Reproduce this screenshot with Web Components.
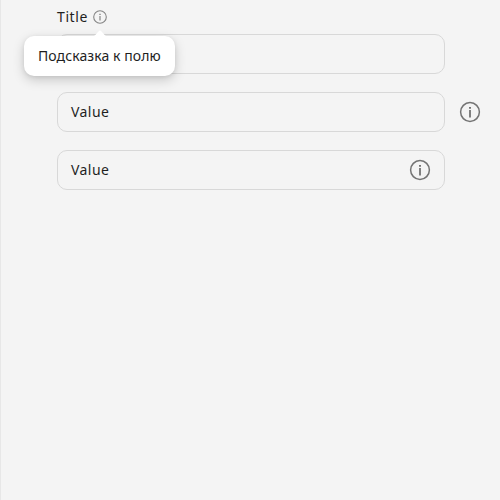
<!DOCTYPE html>
<html lang="ru">
<head>
<meta charset="utf-8">
<title>Fields</title>
<style>html,body{margin:0;height:100%;background:#f4f4f4;overflow:hidden}</style>
</head>
<body>
<form-panel>
  <field-row>
    <field-title slot="title">Title<hint-tip slot="hint">Подсказка к полю</hint-tip></field-title>
    <text-field></text-field>
  </field-row>
  <field-row><text-field>Value</text-field><info-icon slot="after"></info-icon></field-row>
  <field-row><text-field>Value<info-icon slot="icon"></info-icon></text-field></field-row>
</form-panel>
<script>
const define = (name, html) => customElements.define(name, class extends HTMLElement {
  constructor() {
    super();
    this.attachShadow({mode: 'open'}).innerHTML = html;
  }
});
define('info-icon', `<style>
:host{display:block;width:22px;height:22px;color:#747474;flex:none}
:host([small]){width:14px;height:14px;color:#858585}
svg{display:none;width:100%;height:100%}
:host(:not([small])) .big,:host([small]) .tiny{display:block}
</style>
<svg class="big" viewBox="0 0 22 22"><circle cx="11" cy="11" r="9.4" fill="none" stroke="currentColor" stroke-width="1.5"/><path d="M10 6h2v1.800h-2zM10.100 9h1.800V16.500h-1.800z" fill="currentColor"/></svg>
<svg class="tiny" viewBox="0 0 14 14"><circle cx="7" cy="7" r="6.3" fill="none" stroke="currentColor" stroke-width="1.100"/><path d="M6.300 3.700h1.400v1.200H6.300zM6.400 6h1.200v4.500H6.400z" fill="currentColor"/></svg>`);
define('text-field', `<style>
:host{display:flex;box-sizing:border-box;width:388px;height:40px;padding:0 13px;align-items:center;justify-content:space-between;border:1px solid #d8d8d8;border-radius:10px;letter-spacing:.45px}
</style><span><slot></slot></span><slot name="icon"></slot>`);
define('hint-tip', `<style>
:host{position:absolute;z-index:1;top:26px;left:-69px;box-sizing:border-box;width:151px;height:40px;display:flex;align-items:center;padding-left:14px;white-space:nowrap;background:#fff;border-radius:10px;box-shadow:0 4px 12px rgba(0,0,0,.18),0 1px 4px rgba(0,0,0,.08);letter-spacing:.08px}
svg{position:absolute;top:-6px;left:68px;width:16px;height:7px}
</style><svg viewBox="0 0 16 7"><path d="M0 7C3 6 4.500 3.500 6.500 1.500Q8-.3 9.500 1.500C11.500 3.500 13 6 16 7Z" fill="#fff"/></svg><span><slot></slot></span>`);
define('field-title', `<style>
:host{display:flex;align-items:center;height:14px}
.label{width:36px;letter-spacing:.6px}
.anchor{position:relative}
</style><span class="label"><slot></slot></span><div class="anchor"><info-icon small></info-icon><slot name="hint"></slot></div>`);
define('field-row', `<style>
:host{display:flex;flex-direction:column;gap:10px}
.line{display:flex;align-items:center;gap:14px}
</style><slot name="title"></slot><div class="line"><slot></slot><slot name="after"></slot></div>`);
define('form-panel', `<style>
:host{display:flex;flex-direction:column;gap:18px;box-sizing:border-box;height:500px;padding:10px 0 0 56px;border-left:1px solid #e7e7e7;font:14px/20px "Noto Sans",sans-serif;color:#1f1f1f}
</style><slot></slot>`);
</script>
</body>
</html>
